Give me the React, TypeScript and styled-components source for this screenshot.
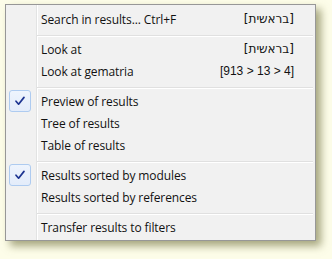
import React from 'react';
import styled, { createGlobalStyle } from 'styled-components';

const GlobalStyle = createGlobalStyle`
    html, body {
        margin: 0;
        padding: 0;
        background: #fdfde9;
    }
`;

const Page = styled.div`
    width: 332px;
    height: 259px;
    padding: 4px 0 0 5px;
    box-sizing: border-box;
`;

// gutter line sits 30px into the menu, grey then white
const Menu = styled.div`
    width: 311px;
    box-sizing: border-box;
    border: 1px solid #979797;
    padding: 3px 2px 2px 0;
    background: linear-gradient(to right, #f1f1f1 30px, #e2e3e3 30px, #e2e3e3 31px, #ffffff 31px, #ffffff 32px, #f1f1f1 32px);
    box-shadow: 5px 5px 8px rgba(95, 95, 40, 0.55);
    font-family: "Open Sans", "Noto Sans", "DejaVu Sans", sans-serif;
    font-size: 12px;
    letter-spacing: -0.1px;
    color: #111;
`;

const Row = styled.div`
    display: flex;
    align-items: center;
    height: 22px;
    padding: 0 19px 0 3px;
`;

const CheckSlot = styled.div<{ $on?: boolean }>`
    width: 22px;
    height: 22px;
    box-sizing: border-box;
    margin-right: 10px;
    display: flex;
    align-items: center;
    justify-content: center;
    border-radius: 3px;
    border: 1px solid ${p => (p.$on ? '#aecbf0' : 'transparent')};
    background: ${p => (p.$on ? 'linear-gradient(#eef4fd, #e3ecfa)' : 'transparent')};
`;

const Label = styled.span`
    flex: 1;
    white-space: nowrap;
`;

const Extra = styled.span<{ $hebrew?: boolean }>`
    white-space: nowrap;
    font-family: ${p => (p.$hebrew ? '"DejaVu Sans"' : '"Liberation Sans"')}, sans-serif;
    font-size: 12px;
    letter-spacing: 0;
`;

const Separator = styled.div`
    height: 8px;
    padding: 5px 0 0 31px;
    box-sizing: border-box;
    &::before {
        content: "";
        display: block;
        height: 1px;
        background: #e0e0e0;
        border-bottom: 1px solid #ffffff;
    }
`;

const Tick = () => (
    <svg width="12" height="12" viewBox="0 0 12 12">
        <path d="M2 6.2 L4.6 9.2 L10 2.4" fill="none" stroke="#1d3491" strokeWidth="1.7" strokeLinecap="round" strokeLinejoin="round" />
    </svg>
);

interface ItemProps {
    label: string;
    extra?: string;
    hebrew?: boolean;
    checked?: boolean;
}

const Item = ({ label, extra, hebrew, checked }: ItemProps) => (
    <Row>
        <CheckSlot $on={checked}>{checked ? <Tick /> : null}</CheckSlot>
        <Label>{label}</Label>
        {extra ? <Extra $hebrew={hebrew}>{extra}</Extra> : null}
    </Row>
);

export default function App() {
    return (
        <Page>
            <GlobalStyle />
            <Menu>
                <Item label="Search in results... Ctrl+F" extra="[בראשית]" hebrew />
                <Separator />
                <Item label="Look at" extra="[בראשית]" hebrew />
                <Item label="Look at gematria" extra="[913 > 13 > 4]" />
                <Separator />
                <Item label="Preview of results" checked />
                <Item label="Tree of results" />
                <Item label="Table of results" />
                <Separator />
                <Item label="Results sorted by modules" checked />
                <Item label="Results sorted by references" />
                <Separator />
                <Item label="Transfer results to filters" />
            </Menu>
        </Page>
    );
}
